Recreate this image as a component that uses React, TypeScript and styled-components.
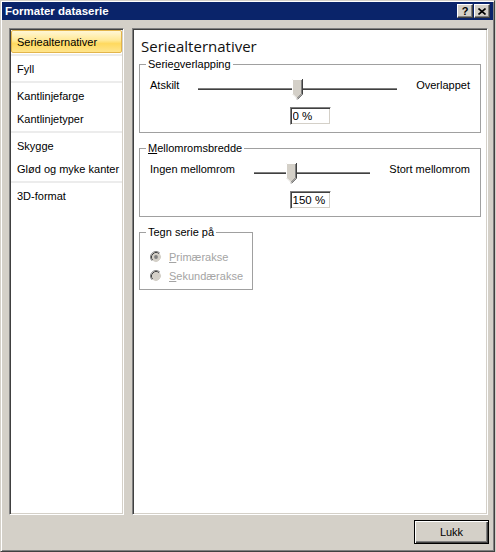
import styled, { createGlobalStyle } from "styled-components";

const GlobalStyle = createGlobalStyle`
  html, body { margin: 0; padding: 0; background: #d4d0c8; }
  body {
    font-family: "Liberation Sans", Arial, sans-serif;
    font-size: 11px;
    color: #000;
  }
  * { box-sizing: border-box; }
`;

const navGroups = [
  ["Seriealternativer"],
  ["Fyll"],
  ["Kantlinjefarge", "Kantlinjetyper"],
  ["Skygge", "Glød og myke kanter"],
  ["3D-format"],
];

const sunken = `
  border: 1px solid;
  border-color: #808080 #fff #fff #808080;
  box-shadow: inset 1px 1px #404040, inset -1px -1px #d4d0c8;
`;

const Thumb = () => (
  <svg width="11" height="21" viewBox="0 0 11 21">
    <polygon points="0,0 10,0 10,15 5,20 0,15" fill="#d4d0c8" />
    <polyline points="0.5,15 0.5,0.5 10,0.5" fill="none" stroke="#fff" />
    <polyline points="10.5,0 10.5,15.2 5.3,20.4" fill="none" stroke="#404040" />
    <polyline points="9.5,1 9.5,14.8 5,19.3" fill="none" stroke="#808080" />
    <line x1="0.7" y1="15.2" x2="5" y2="19.5" stroke="#fff" />
  </svg>
);

const Radio = ({ checked }: { checked?: boolean }) => (
  <svg width="12" height="12" viewBox="0 0 12 12">
    <circle cx="6" cy="6" r="4.2" fill="#d4d0c8" />
    <path d="M2.11 9.89 A5.5 5.5 0 0 1 9.89 2.11" fill="none" stroke="#808080" />
    <path d="M9.89 2.11 A5.5 5.5 0 0 1 2.11 9.89" fill="none" stroke="#fff" />
    <path d="M2.82 9.18 A4.5 4.5 0 0 1 9.18 2.82" fill="none" stroke="#404040" />
    <path d="M9.18 2.82 A4.5 4.5 0 0 1 2.82 9.18" fill="none" stroke="#d4d0c8" />
    {checked && <circle cx="6" cy="6" r="1.9" fill="#808080" />}
  </svg>
);

const Slider = ({ value }: { value: number }) => (
  <SliderBox>
    <Track />
    <ThumbHolder $value={value}>
      <Thumb />
    </ThumbHolder>
  </SliderBox>
);

export default function App() {
  return (
    <>
      <GlobalStyle />
      <Window>
        <TitleBar>
          <TitleText>Formater dataserie</TitleText>
          <TitleButtons>
            <TitleButton>?</TitleButton>
            <TitleButton>
              <svg width="8" height="7" viewBox="0 0 8 7">
                <path d="M0.5 0.5 L7.5 6.5 M7.5 0.5 L0.5 6.5" stroke="#000" strokeWidth="1.6" />
              </svg>
            </TitleButton>
          </TitleButtons>
        </TitleBar>

        <Body>
          <Nav>
            {navGroups.map((group, gi) => (
              <div key={gi}>
                {gi > 0 && <NavSeparator />}
                {group.map((label) => (
                  <NavItem key={label} $selected={label === "Seriealternativer"}>
                    {label}
                  </NavItem>
                ))}
              </div>
            ))}
          </Nav>

          <Panel>
            <Heading>Seriealternativer</Heading>

            <Group>
              <Legend>Serie<u>o</u>verlapping</Legend>
              <GroupBody>
                <SliderRow>
                  <SliderLabel>Atskilt</SliderLabel>
                  <Slider value={0.5} />
                  <SliderLabel>Overlappet</SliderLabel>
                </SliderRow>
                <ValueRow>
                  <ValueInput readOnly value="0 %" />
                </ValueRow>
              </GroupBody>
            </Group>

            <Group $spaced>
              <Legend><u>M</u>ellomromsbredde</Legend>
              <GroupBody>
                <SliderRow>
                  <SliderLabel>Ingen mellomrom</SliderLabel>
                  <Slider value={0.3} />
                  <SliderLabel>Stort mellomrom</SliderLabel>
                </SliderRow>
                <ValueRow>
                  <ValueInput readOnly value="150 %" />
                </ValueRow>
              </GroupBody>
            </Group>

            <Group $spaced $width={114}>
              <Legend>Tegn serie på</Legend>
              <RadioList>
                <RadioRow>
                  <Radio checked />
                  <RadioLabel><u>P</u>rimærakse</RadioLabel>
                </RadioRow>
                <RadioRow>
                  <Radio />
                  <RadioLabel><u>S</u>ekundærakse</RadioLabel>
                </RadioRow>
              </RadioList>
            </Group>
          </Panel>
        </Body>

        <Footer>
          <CloseButton>Lukk</CloseButton>
        </Footer>
      </Window>
    </>
  );
}

const Window = styled.div`
  width: 495px;
  height: 552px;
  display: flex;
  flex-direction: column;
  background: #d4d0c8;
  border: 1px solid;
  border-color: #d4d0c8 #404040 #404040 #d4d0c8;
  box-shadow: inset 1px 1px #fff, inset -1px -1px #808080;
  padding: 1px;
`;

const TitleBar = styled.div`
  flex: none;
  height: 18px;
  background: #0a246a;
  display: flex;
  align-items: center;
  justify-content: space-between;
  padding: 0 3px;
`;

const TitleText = styled.span`
  color: #fff;
  font-weight: bold;
  font-size: 11.5px;
`;

const TitleButtons = styled.div`
  display: flex;
  gap: 1px;
`;

const TitleButton = styled.div`
  width: 16px;
  height: 14px;
  background: #d4d0c8;
  border: 1px solid;
  border-color: #fff #404040 #404040 #fff;
  box-shadow: inset -1px -1px #808080;
  display: flex;
  align-items: center;
  justify-content: center;
  font-weight: bold;
  font-size: 11px;
  line-height: 12px;
`;

const Body = styled.div`
  flex: 1;
  min-height: 0;
  display: flex;
  gap: 8px;
  padding: 8px 5px 0 7px;
`;

const Nav = styled.div`
  width: 115px;
  flex: none;
  background: #fff;
  ${sunken}
  padding: 1px;
`;

const NavItem = styled.div<{ $selected?: boolean }>`
  height: 23px;
  display: flex;
  align-items: center;
  padding-left: 5px;
  border: 1px solid ${(p) => (p.$selected ? "#e2b54c" : "transparent")};
  border-radius: 2px;
  background: ${(p) =>
    p.$selected
      ? "linear-gradient(#fff7d6 0%, #ffe894 45%, #ffd95f 60%, #ffe58c 100%)"
      : "transparent"};
  white-space: nowrap;
`;

const NavSeparator = styled.div`
  height: 2px;
  margin: 1px 0;
  background: #ececec;
`;

const Panel = styled.div`
  flex: 1;
  background: #fff;
  ${sunken}
  padding: 7px 6px 0 6px;
`;

const Heading = styled.div`
  font-family: "Open Sans", "Liberation Sans", sans-serif;
  font-size: 15px;
  line-height: 20px;
  padding-left: 2px;
  margin-bottom: 1px;
  color: #111;
`;

const Group = styled.fieldset<{ $spaced?: boolean; $width?: number }>`
  margin: ${(p) => (p.$spaced ? "8px" : "0")} 0 0 0;
  padding: 0;
  min-width: 0;
  width: ${(p) => (p.$width ? `${p.$width}px` : "auto")};
  border: 1px solid #a0a0a0;
`;

const Legend = styled.legend`
  margin-left: 6px;
  padding: 0 2px;
  font-size: 11px;
  line-height: 14px;
`;

const GroupBody = styled.div`
  padding: 8px 10px 7px 10px;
`;

const SliderRow = styled.div`
  display: flex;
  align-items: flex-start;
  gap: 19px;
  height: 22px;
`;

const SliderLabel = styled.span`
  line-height: 13px;
  white-space: nowrap;
`;

const SliderBox = styled.div`
  flex: 1;
  height: 22px;
  position: relative;
`;

const Track = styled.div`
  margin-top: 9px;
  height: 2px;
  border-top: 1px solid #808080;
  border-bottom: 1px solid #404040;
`;

const ThumbHolder = styled.div<{ $value: number }>`
  position: absolute;
  top: 0;
  left: calc(6px + ${(p) => p.$value} * (100% - 12px) - 5.5px);
  width: 11px;
  height: 21px;
  line-height: 0;
`;

const ValueRow = styled.div`
  display: flex;
  justify-content: center;
  margin-top: 6px;
`;

const ValueInput = styled.input`
  width: 41px;
  height: 18px;
  margin: 0;
  padding: 0 0 0 2px;
  background: #fff;
  ${sunken}
  font-family: "Liberation Sans", Arial, sans-serif;
  font-size: 11.5px;
  color: #000;
  outline: none;
`;

const RadioList = styled.div`
  padding: 8px 0 4px 10px;
`;

const RadioRow = styled.div`
  height: 19px;
  display: flex;
  align-items: center;
  gap: 7px;
`;

const RadioLabel = styled.span`
  color: #a4a4a4;
`;

const Footer = styled.div`
  flex: none;
  height: 35px;
  display: flex;
  justify-content: flex-end;
  align-items: flex-start;
  padding: 5px 4px 0 0;
`;

const CloseButton = styled.button`
  width: 75px;
  height: 24px;
  margin: 0;
  padding: 0;
  background: #d4d0c8;
  border: 1px solid #000;
  box-shadow: inset 1px 1px #fff, inset -1px -1px #404040, inset -2px -2px #808080;
  font-family: "Liberation Sans", Arial, sans-serif;
  font-size: 11px;
  color: #000;
`;
